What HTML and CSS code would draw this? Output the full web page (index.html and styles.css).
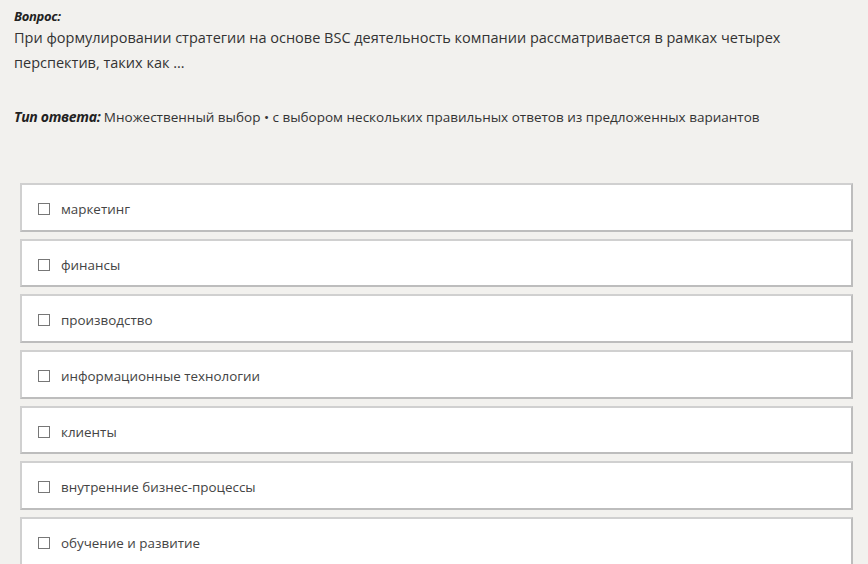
FILE: index.html
```html
<!DOCTYPE html>
<html lang="ru">
<head>
    <meta charset="UTF-8">
    <title>Вопрос</title>
    <link rel="stylesheet" href="styles.css">
</head>
<body>
    <div class="question">
        <div class="label">Вопрос:</div>
        <div class="text">При формулировании стратегии на основе BSC деятельность компании рассматривается в рамках четырех перспектив, таких как …</div>
        <div class="type"><span class="label">Тип ответа:</span> Множественный выбор • с выбором нескольких правильных ответов из предложенных вариантов</div>
    </div>
    <div class="options">
        <label class="option"><span class="box"></span>маркетинг</label>
        <label class="option"><span class="box"></span>финансы</label>
        <label class="option"><span class="box"></span>производство</label>
        <label class="option"><span class="box"></span>информационные технологии</label>
        <label class="option"><span class="box"></span>клиенты</label>
        <label class="option"><span class="box"></span>внутренние бизнес-процессы</label>
        <label class="option"><span class="box"></span>обучение и развитие</label>
    </div>
</body>
</html>
```

FILE: styles.css
```css
body {
    margin: 0;
    background: #f2f1ee;
    font-family: "Open Sans", "Noto Sans", sans-serif;
    color: #333;
}
.question {
    padding: 7px 14px 0 14px;
}
.label {
    font-weight: bold;
    font-style: italic;
    font-size: 13px;
    color: #222;
    letter-spacing: -0.3px;
}
.text {
    font-size: 14.5px;
    line-height: 25px;
    width: 800px;
}
.type {
    margin-top: 32px;
    font-size: 13.5px;
    color: #333;
}
.type .label {
    font-size: 14px;
}
.options {
    display: flex;
    flex-direction: column;
    gap: 7px;
    margin: 57px 15px 0 20px;
}
.option {
    display: flex;
    align-items: center;
    height: 41.7px;
    padding: 3px 0 0 16px;
    background: #fff;
    border: 2px solid #bdbdbd;
    border-top-color: #d0d0d0;
    border-left-color: #d0d0d0;
    font-size: 13.4px;
    color: #444;
}
.box {
    width: 10px;
    height: 10px;
    border: 1px solid #777;
    margin-right: 11px;
}
```
